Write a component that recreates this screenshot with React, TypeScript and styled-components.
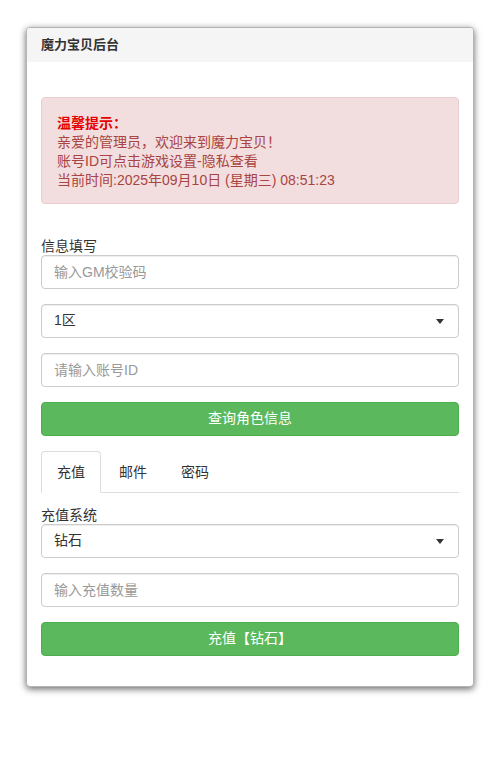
import { useState } from 'react';
import styled, { createGlobalStyle } from 'styled-components';

const GlobalStyle = createGlobalStyle`
  html, body {
    margin: 0;
    padding: 0;
    background: #fff;
  }
  body {
    font-family: "Liberation Sans", "Noto Sans CJK SC", sans-serif;
    font-size: 14px;
    line-height: 1.42857;
    color: #333;
  }
  * {
    box-sizing: border-box;
  }
`;

const tabs = ['充值', '邮件', '密码'];

const App = () => {
  const [active, setActive] = useState(0);

  return (
    <>
      <GlobalStyle />
      <Page>
        <Panel>
          <PanelHeading>魔力宝贝后台</PanelHeading>
          <PanelBody>
            <Alert>
              <AlertTitle>温馨提示：</AlertTitle>
              <div>亲爱的管理员，欢迎来到魔力宝贝！</div>
              <div>账号ID可点击游戏设置-隐私查看</div>
              <div>当前时间:2025年09月10日 (星期三) 08:51:23</div>
            </Alert>

            <Label>信息填写</Label>
            <FormGroup>
              <Input placeholder="输入GM校验码" />
            </FormGroup>
            <FormGroup>
              <SelectBox>
                <span>1区</span>
                <Caret />
              </SelectBox>
            </FormGroup>
            <FormGroup>
              <Input placeholder="请输入账号ID" />
            </FormGroup>
            <Button>查询角色信息</Button>

            <NavTabs>
              {tabs.map((t, i) => (
                <Tab key={t} $active={i === active} onClick={() => setActive(i)}>
                  {t}
                </Tab>
              ))}
            </NavTabs>

            <Label>充值系统</Label>
            <FormGroup>
              <SelectBox>
                <span>钻石</span>
                <Caret />
              </SelectBox>
            </FormGroup>
            <FormGroup>
              <Input placeholder="输入充值数量" />
            </FormGroup>
            <Button>充值【钻石】</Button>
          </PanelBody>
        </Panel>
      </Page>
    </>
  );
};

export default App;

const Page = styled.div`
  padding: 27px 26px 40px;
  min-height: 760px;
`;

const Panel = styled.div`
  width: 448px;
  background: #fff;
  border: 1px solid #b5b5b5;
  border-radius: 4px;
  box-shadow: 0 2px 7px rgba(0, 0, 0, 0.6);
  overflow: hidden;
`;

const PanelHeading = styled.div`
  height: 34px;
  padding: 0 14px;
  display: flex;
  align-items: center;
  background: #f5f5f5;
  font-weight: bold;
  font-size: 13px;
  color: #333;
`;

const PanelBody = styled.div`
  padding: 35px 14px 30px;
`;

const Alert = styled.div`
  padding: 16px 15px 13px;
  margin-bottom: 33px;
  background: #f2dede;
  border: 1px solid #ebccd1;
  border-radius: 4px;
  color: #a94442;
  line-height: 19px;
`;

const AlertTitle = styled.div`
  color: #e60000;
  font-weight: bold;
`;

const Label = styled.div`
  font-size: 14px;
  line-height: 18px;
  color: #333;
`;

const FormGroup = styled.div`
  margin-bottom: 15px;
`;

const Input = styled.input`
  display: block;
  width: 100%;
  height: 34px;
  padding: 6px 12px;
  font: inherit;
  font-size: 14px;
  color: #555;
  background: #fff;
  border: 1px solid #ccc;
  border-radius: 4px;
  box-shadow: inset 0 1px 1px rgba(0, 0, 0, 0.075);
  outline: none;

  &::placeholder {
    color: #999;
  }
`;

const SelectBox = styled.div`
  display: flex;
  align-items: center;
  justify-content: space-between;
  height: 34px;
  padding: 0 14px 0 12px;
  border: 1px solid #ccc;
  border-radius: 4px;
  box-shadow: inset 0 1px 1px rgba(0, 0, 0, 0.075);
  color: #333;
  font-size: 14px;
`;

const Caret = styled.span`
  width: 0;
  height: 0;
  border-left: 4px solid transparent;
  border-right: 4px solid transparent;
  border-top: 5px solid #333;
`;

const Button = styled.button`
  display: block;
  width: 100%;
  height: 34px;
  font: inherit;
  font-size: 14px;
  color: #fff;
  background: #5cb85c;
  border: 1px solid #4cae4c;
  border-radius: 4px;
  cursor: pointer;
`;

const NavTabs = styled.div`
  display: flex;
  margin-top: 15px;
  margin-bottom: 13px;
  border-bottom: 1px solid #ddd;
`;

const Tab = styled.div<{ $active: boolean }>`
  margin-right: 2px;
  margin-bottom: -1px;
  padding: 10px 15px;
  line-height: 20px;
  font-size: 14px;
  color: #333;
  cursor: pointer;
  border: 1px solid ${(p) => (p.$active ? '#ddd' : 'transparent')};
  border-bottom-color: ${(p) => (p.$active ? '#fff' : 'transparent')};
  border-radius: 4px 4px 0 0;
  background: ${(p) => (p.$active ? '#fff' : 'transparent')};
`;
